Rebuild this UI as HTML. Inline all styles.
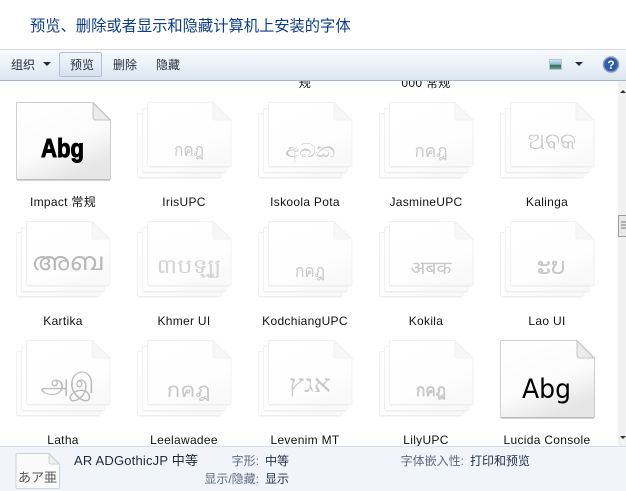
<!DOCTYPE html>
<html lang="zh-CN"><head><meta charset="utf-8"><title>字体</title>
<style>
html,body{margin:0;padding:0;background:#fff;overflow:hidden}
svg{display:block}
text{font-family:"Liberation Sans","Noto Sans CJK SC",sans-serif}
.l{font-size:12px;fill:#111;text-anchor:middle;letter-spacing:.3px}
.t{font-size:12px;fill:#1e2b3c}
.g{fill:#c8c8c8;text-anchor:middle;font-family:"DejaVu Sans","Liberation Sans","Noto Sans CJK SC",sans-serif}
.k{fill:#5b6b80;font-size:12px;text-anchor:end}
.v{fill:#1e3048;font-size:12px}
</style></head><body>
<svg xmlns="http://www.w3.org/2000/svg" width="626" height="491" viewBox="0 0 626 491">
<defs>
<linearGradient id="tb" x1="0" y1="0" x2="0" y2="1"><stop offset="0" stop-color="#f7fafd"/><stop offset=".5" stop-color="#eaf1f8"/><stop offset="1" stop-color="#d9e4f0"/></linearGradient>
<linearGradient id="btn" x1="0" y1="0" x2="0" y2="1"><stop offset="0" stop-color="#f4f7fb"/><stop offset="1" stop-color="#d5e1ee"/></linearGradient>
<linearGradient id="pg" x1="0" y1="0" x2=".6" y2="1"><stop offset="0" stop-color="#fff"/><stop offset=".75" stop-color="#fefefe"/><stop offset="1" stop-color="#f9f9f9"/></linearGradient>
<linearGradient id="sg" x1="0" y1="0" x2=".5" y2="1"><stop offset="0" stop-color="#fff"/><stop offset=".65" stop-color="#fbfbfb"/><stop offset="1" stop-color="#e6e6e6"/></linearGradient>
<linearGradient id="sky" x1="0" y1="0" x2="0" y2="1"><stop offset="0" stop-color="#d5e8f2"/><stop offset=".5" stop-color="#8dbcd6"/><stop offset=".55" stop-color="#2f6d5c"/><stop offset="1" stop-color="#6f9e8c"/></linearGradient>
<symbol id="sheet" overflow="visible"><path d="M1.500 .5H66L84 18V63Q84 64.500 82.500 64.500H1.500Q.5 64.500 .5 63V1.500Q.5 .5 1.500 .5Z" fill="url(#pg)" stroke="#f1f1f1"/><path d="M1.500 65H82.500" stroke="#ebebeb"/><path d="M66 1V16Q66 18 68 18H83.500Z" fill="#f7f7f7" stroke="#f2f2f2"/></symbol>
<symbol id="stack" overflow="visible">
<use href="#sheet" x="0" y="11"/><use href="#sheet" x="5" y="6"/><use href="#sheet" x="10" y="0"/>
</symbol>
<symbol id="single" overflow="visible">
<path d="M1 .5H77L94.500 18V76.500Q94.500 77.500 93.500 77.500H1Q.5 77.500 .5 76.500V1Q.5 .5 1 .5Z" fill="url(#sg)" stroke="#cfcfcf"/>
<path d="M77 1V15Q77 18 80 18H94Z" fill="#ececec" stroke="#c4c4c4"/>
<path d="M1 78H94" stroke="#a8a8a8"/>
</symbol>
</defs>

<rect width="626" height="491" fill="#fff"/>
<text x="30" y="31" font-size="15.270" fill="#0d3c8c">预览、删除或者显示和隐藏计算机上安装的字体</text>

<!-- clipped labels, partly hidden by the toolbar -->
<text class="l" x="305" y="87">规</text>
<text class="l" x="426" y="87">000 常规</text>

<!-- toolbar -->
<rect y="49" width="626" height="32" fill="url(#tb)"/>
<rect y="49" width="626" height="1" fill="#d4dce6"/>
<rect y="80" width="626" height="1" fill="#a9b5c3"/>
<text class="t" x="11" y="69">组织</text>
<path d="M43 62h8l-4 4z" fill="#1f2f45"/>
<rect x="59.500" y="52.500" width="42" height="24" rx="2" fill="url(#btn)" stroke="#b0c0d0"/>
<text class="t" x="70" y="69">预览</text>
<text class="t" x="113" y="69">删除</text>
<text class="t" x="156" y="69">隐藏</text>
<rect x="549.500" y="59.500" width="12" height="10" fill="url(#sky)" stroke="#b7c4cf"/>
<path d="M575 62h8l-4 4z" fill="#1f2f45"/>
<circle cx="611" cy="64.500" r="7.500" fill="#2c5cb0" stroke="#8b9bb8" stroke-width="1.500"/>
<text x="611" y="69" font-size="12" font-weight="bold" fill="#fff" text-anchor="middle">?</text>

<!-- row 1 -->
<use href="#single" x="16" y="102"/>
<text x="62.500" y="157" font-size="26" font-weight="bold" text-anchor="middle" fill="#000" stroke="#000" stroke-width="1" textLength="43" lengthAdjust="spacingAndGlyphs">Abg</text>
<use href="#stack" x="137" y="102"/>
<text class="g" x="189" y="156" font-size="18" textLength="30" lengthAdjust="spacingAndGlyphs">กคฎ</text>
<use href="#stack" x="258" y="102"/>
<text class="g" x="310" y="157" font-size="19" textLength="50" lengthAdjust="spacingAndGlyphs">අබක</text>
<use href="#stack" x="379" y="102"/>
<text class="g" x="431" y="157" font-size="18" textLength="33" lengthAdjust="spacingAndGlyphs">กคฎ</text>
<use href="#stack" x="500" y="102"/>
<text class="g" x="552" y="149" font-size="23" textLength="48" lengthAdjust="spacingAndGlyphs">ଅବକ</text>
<text class="l" x="63" y="206">Impact 常规</text>
<text class="l" x="184" y="206">IrisUPC</text>
<text class="l" x="305" y="206">Iskoola Pota</text>
<text class="l" x="426" y="206">JasmineUPC</text>
<text class="l" x="547" y="206">Kalinga</text>

<!-- row 2 -->
<use href="#stack" x="16" y="221"/>
<text class="g" x="67" y="270" font-size="25" textLength="71" lengthAdjust="spacingAndGlyphs" style="fill:#b9b9b9">അബ</text>
<use href="#stack" x="137" y="221"/>
<text class="g" x="189" y="273" font-size="20" textLength="65" lengthAdjust="spacingAndGlyphs" style="fill:#d4d4d4">៣បឡ្ឃ</text>
<use href="#stack" x="258" y="221"/>
<text class="g" x="310" y="277" font-size="18" textLength="30" lengthAdjust="spacingAndGlyphs">กคฎ</text>
<use href="#stack" x="379" y="221"/>
<text class="g" x="431" y="274" font-size="18" textLength="41" lengthAdjust="spacingAndGlyphs">अबक</text>
<use href="#stack" x="500" y="221"/>
<text class="g" x="551" y="274" font-size="24" textLength="29" lengthAdjust="spacingAndGlyphs">ະບ</text>
<text class="l" x="63" y="325">Kartika</text>
<text class="l" x="184" y="325">Khmer UI</text>
<text class="l" x="305" y="325">KodchiangUPC</text>
<text class="l" x="426" y="325">Kokila</text>
<text class="l" x="547" y="325">Lao UI</text>

<!-- row 3 -->
<use href="#stack" x="16" y="340"/>
<text class="g" x="67.500" y="393" font-size="28" textLength="54" lengthAdjust="spacingAndGlyphs" style="fill:#bbb">அஇ</text>
<use href="#stack" x="137" y="340"/>
<text class="g" x="188.500" y="397" font-size="20" textLength="44" lengthAdjust="spacingAndGlyphs">กคฎ</text>
<use href="#stack" x="258" y="340"/>
<text class="g" x="310" y="392" font-size="24" textLength="42" lengthAdjust="spacingAndGlyphs" style="font-family:'Liberation Serif',serif">אגץ</text>
<use href="#stack" x="379" y="340"/>
<text class="g" x="431" y="396" font-size="17" font-weight="bold" textLength="30" lengthAdjust="spacingAndGlyphs">กคฎ</text>
<use href="#single" x="500" y="340"/>
<text x="546.500" y="398" font-size="27" text-anchor="middle" fill="#000" style="font-family:'DejaVu Sans',sans-serif" textLength="49" lengthAdjust="spacingAndGlyphs">Abg</text>
<text class="l" x="63" y="444">Latha</text>
<text class="l" x="184" y="444">Leelawadee</text>
<text class="l" x="305" y="444">Levenim MT</text>
<text class="l" x="426" y="444">LilyUPC</text>
<text class="l" x="547" y="444">Lucida Console</text>

<!-- scrollbar -->
<rect x="618" y="81" width="8" height="365" fill="#f1f1f1"/>
<path d="M623 90l3 3h-6z" fill="#333"/>
<rect x="618.500" y="215.500" width="9" height="21" fill="#e8e8e8" stroke="#9a9a9a"/>
<path d="M621 222h5M621 225h5M621 228h5" stroke="#777"/>
<path d="M620 436h6l-3 3z" fill="#333"/>

<!-- details pane -->
<rect y="446" width="626" height="45" fill="#f1f5fb"/>
<rect y="446" width="626" height="1" fill="#d5dfea"/>
<path d="M17 453.500H49L59.500 464V487.500Q59.500 488.500 58.500 488.500H17Q16 488.500 16 487.500V454.500Q16 453.500 17 453.500Z" fill="#fafafa" stroke="#cfd2d6"/>
<path d="M49 454V462Q49 464 51 464H59Z" fill="#f0f0f0" stroke="#d4d4d4"/>
<text x="18" y="482" font-size="13" fill="#555" style="font-family:'Noto Sans CJK JP',sans-serif" textLength="39">あア亜</text>
<text x="74" y="465" font-size="13" fill="#1c2a3c" textLength="124">AR ADGothicJP 中等</text>
<text class="k" x="259" y="465">字形:</text><text class="v" x="265" y="465">中等</text>
<text class="k" x="259" y="483">显示/隐藏:</text><text class="v" x="265" y="483">显示</text>
<text class="k" x="464" y="465">字体嵌入性:</text><text class="v" x="470" y="465">打印和预览</text>
</svg>
</body></html>
